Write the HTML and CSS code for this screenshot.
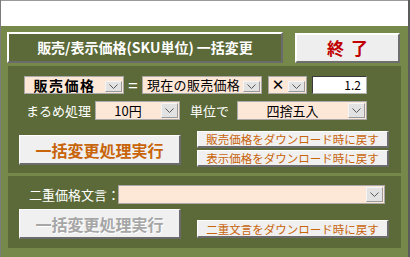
FILE: index.html
```html
<!DOCTYPE html>
<html lang="ja">
<head>
    <meta charset="UTF-8">
    <title>販売/表示価格(SKU単位) 一括変更</title>
    <link rel="stylesheet" href="styles.css">
</head>
<body>
    <div class="window">
        <div class="topbar"></div>

        <div class="header">
            <div class="title-box">販売/表示価格(SKU単位) 一括変更</div>
            <button class="close-button">終了</button>
        </div>

        <div class="panel">
            <div class="section upper">
                <div class="row row1">
                    <div class="combo combo-sale">
                        <span class="combo-text bold">販売価格</span>
                        <span class="drop small"><svg width="9" height="5" viewBox="0 0 9 5"><polyline points="0.5,0.5 4.5,4.5 8.5,0.5" fill="none" stroke="#5a5a5a" stroke-width="1"/></svg></span>
                    </div>
                    <span class="equals">=</span>
                    <div class="combo combo-base">
                        <span class="combo-text left">現在の販売価格</span>
                        <span class="drop small"><svg width="9" height="5" viewBox="0 0 9 5"><polyline points="0.5,0.5 4.5,4.5 8.5,0.5" fill="none" stroke="#5a5a5a" stroke-width="1"/></svg></span>
                    </div>
                    <div class="combo combo-op">
                        <span class="combo-text times">✕</span>
                        <span class="drop small"><svg width="9" height="5" viewBox="0 0 9 5"><polyline points="0.5,0.5 4.5,4.5 8.5,0.5" fill="none" stroke="#5a5a5a" stroke-width="1"/></svg></span>
                    </div>
                    <div class="number-input">1.2</div>
                </div>

                <div class="row row2">
                    <span class="label label-round">まるめ処理</span>
                    <div class="combo combo-unit">
                        <span class="combo-text">10円</span>
                        <span class="drop"><svg width="9" height="5" viewBox="0 0 9 5"><polyline points="0.5,0.5 4.5,4.5 8.5,0.5" fill="none" stroke="#5a5a5a" stroke-width="1"/></svg></span>
                    </div>
                    <span class="label label-by">単位で</span>
                    <div class="combo combo-method">
                        <span class="combo-text">四捨五入</span>
                        <span class="drop"><svg width="9" height="5" viewBox="0 0 9 5"><polyline points="0.5,0.5 4.5,4.5 8.5,0.5" fill="none" stroke="#5a5a5a" stroke-width="1"/></svg></span>
                    </div>
                </div>

                <div class="row row3">
                    <button class="big-button">一括変更処理実行</button>
                    <div class="reset-list">
                        <button class="reset-button">販売価格をダウンロード時に戻す</button>
                        <button class="reset-button">表示価格をダウンロード時に戻す</button>
                    </div>
                </div>
            </div>

            <div class="section lower">
                <div class="row row4">
                    <span class="label label-text">二重価格文言：</span>
                    <div class="combo combo-wide">
                        <span class="combo-text"></span>
                        <span class="drop"><svg width="9" height="5" viewBox="0 0 9 5"><polyline points="0.5,0.5 4.5,4.5 8.5,0.5" fill="none" stroke="#5a5a5a" stroke-width="1"/></svg></span>
                    </div>
                </div>
                <div class="row row5">
                    <button class="big-button disabled">一括変更処理実行</button>
                    <button class="reset-button single">二重文言をダウンロード時に戻す</button>
                </div>
            </div>
        </div>
    </div>
</body>
</html>
```

FILE: styles.css
```css
* {
    box-sizing: border-box;
}

body {
    margin: 0;
    padding: 0;
    font-family: "Noto Sans CJK JP", "Noto Sans", sans-serif;
    background-color: #76894a;
}

.window {
    width: 410px;
    height: 257px;
    background-color: #76894a;
    border-left: 1px solid #7c7c7c;
    border-right: 2px solid #5c5c5c;
}

.topbar {
    height: 26px;
    background-color: #fff;
    border-top: 1px solid #9a9a9a;
}

/* title + close button */
.header {
    display: flex;
    padding: 6px 0 0 6px;
    height: 37px;
}

.title-box {
    width: 276px;
    height: 31px;
    background-color: #5b6a38;
    border: 2px solid;
    border-color: #fff #6b6b6b #6b6b6b #fff;
    color: #fff;
    font-size: 14px;
    font-weight: bold;
    line-height: 26px;
    text-align: center;
}

.close-button {
    margin: 1px 0 0 12px;
    width: 105px;
    height: 30px;
    padding: 0;
    background-color: #eeeeee;
    border: 2px solid;
    border-color: #fff #6e6e6e #6e6e6e #fff;
    color: #c00000;
    font-family: inherit;
    font-size: 17px;
    font-weight: bold;
    letter-spacing: 7px;
    text-indent: 7px;
    line-height: 24px;
}

/* main dark panel */
.panel {
    margin: 3px 0 0 7px;
    width: 393px;
    background-color: #5b6a38;
}

.section {
    padding-left: 11px;
}

.upper {
    height: 110px;
    padding-top: 10px;
    border-bottom: 3px solid #76894a;
}

.lower {
    height: 72px;
    padding-top: 9px;
}

.row {
    display: flex;
    align-items: flex-start;
}

.row1 {
    padding-left: 5px;
    height: 18px;
}

.row2 {
    margin-top: 7px;
    padding-left: 7px;
    height: 19px;
}

.row3 {
    margin-top: 11px;
}

.row4 {
    padding-left: 10px;
    height: 19px;
}

.row5 {
    margin-top: 5px;
}

.label {
    color: #fff;
    font-size: 13px;
    line-height: 19px;
    white-space: nowrap;
}

.label-round {
    width: 69px;
}

.label-by {
    width: 57px;
    padding-left: 10px;
}

.label-text {
    width: 89px;
}

.equals {
    width: 18px;
    color: #fff;
    font-size: 17px;
    line-height: 18px;
    text-align: center;
}

/* combo boxes */
.combo {
    display: flex;
    height: 100%;
    background-color: #fde8d8;
    border: 1px solid #a9a9a9;
}

.combo-sale {
    width: 100px;
}

.combo-base {
    width: 120px;
}

.combo-op {
    width: 39px;
    margin-left: 6px;
}

.combo-unit {
    width: 85px;
}

.combo-method {
    width: 130px;
}

.combo-wide {
    width: 267px;
}

.combo-text {
    flex: 1;
    font-size: 13px;
    line-height: 17px;
    color: #000;
    text-align: center;
    white-space: nowrap;
}

.row1 .combo-text {
    line-height: 16px;
}

.combo-text.bold {
    font-size: 14px;
    font-weight: bold;
    letter-spacing: 1.5px;
}

.combo-text.left {
    text-align: left;
    padding-left: 4px;
    letter-spacing: 0.3px;
}

.combo-text.times {
    font-family: "DejaVu Sans", sans-serif;
    font-size: 15px;
    font-weight: bold;
}

.drop {
    width: 17px;
    flex: none;
    margin: 1px;
    display: flex;
    align-items: center;
    justify-content: center;
    background-color: #e2e2e2;
    border: 1px solid;
    border-color: #f5f5f5 #9a9a9a #9a9a9a #f5f5f5;
}

.drop.small {
    margin-top: 4px;
    height: 11px;
}

.number-input {
    width: 55px;
    height: 100%;
    margin-left: 5px;
    background-color: #fff;
    border: 1px solid;
    border-color: #3a3a3a #b0b0b0 #b0b0b0 #3a3a3a;
    font-size: 12px;
    line-height: 16px;
    text-align: right;
    padding-right: 5px;
}

/* buttons */
.big-button {
    margin-top: 4px;
    width: 162px;
    height: 30px;
    padding: 0;
    background-color: #f0f0f0;
    border: 1px solid;
    border-width: 1px 2px 2px 1px;
    border-color: #fff #6b6b6b #6b6b6b #fff;
    color: #c8640a;
    font-family: inherit;
    font-size: 16px;
    font-weight: bold;
    line-height: 26px;
}

.row5 .big-button {
    margin-top: 0;
}

.big-button.disabled {
    color: #a6a6a6;
    text-shadow: 1px 1px 0 #fff;
}

.reset-list {
    display: flex;
    flex-direction: column;
    gap: 2px;
    margin-left: 16px;
}

.reset-button {
    width: 192px;
    height: 17px;
    padding: 0;
    background-color: #f0f0f0;
    border: 1px solid;
    border-width: 1px 2px 2px 1px;
    border-color: #fff #6b6b6b #6b6b6b #fff;
    color: #c8640a;
    font-family: inherit;
    font-size: 11.5px;
    line-height: 14px;
    text-align: center;
    white-space: nowrap;
}

.reset-button.single {
    margin: 11px 0 0 16px;
    height: 18px;
}
```
